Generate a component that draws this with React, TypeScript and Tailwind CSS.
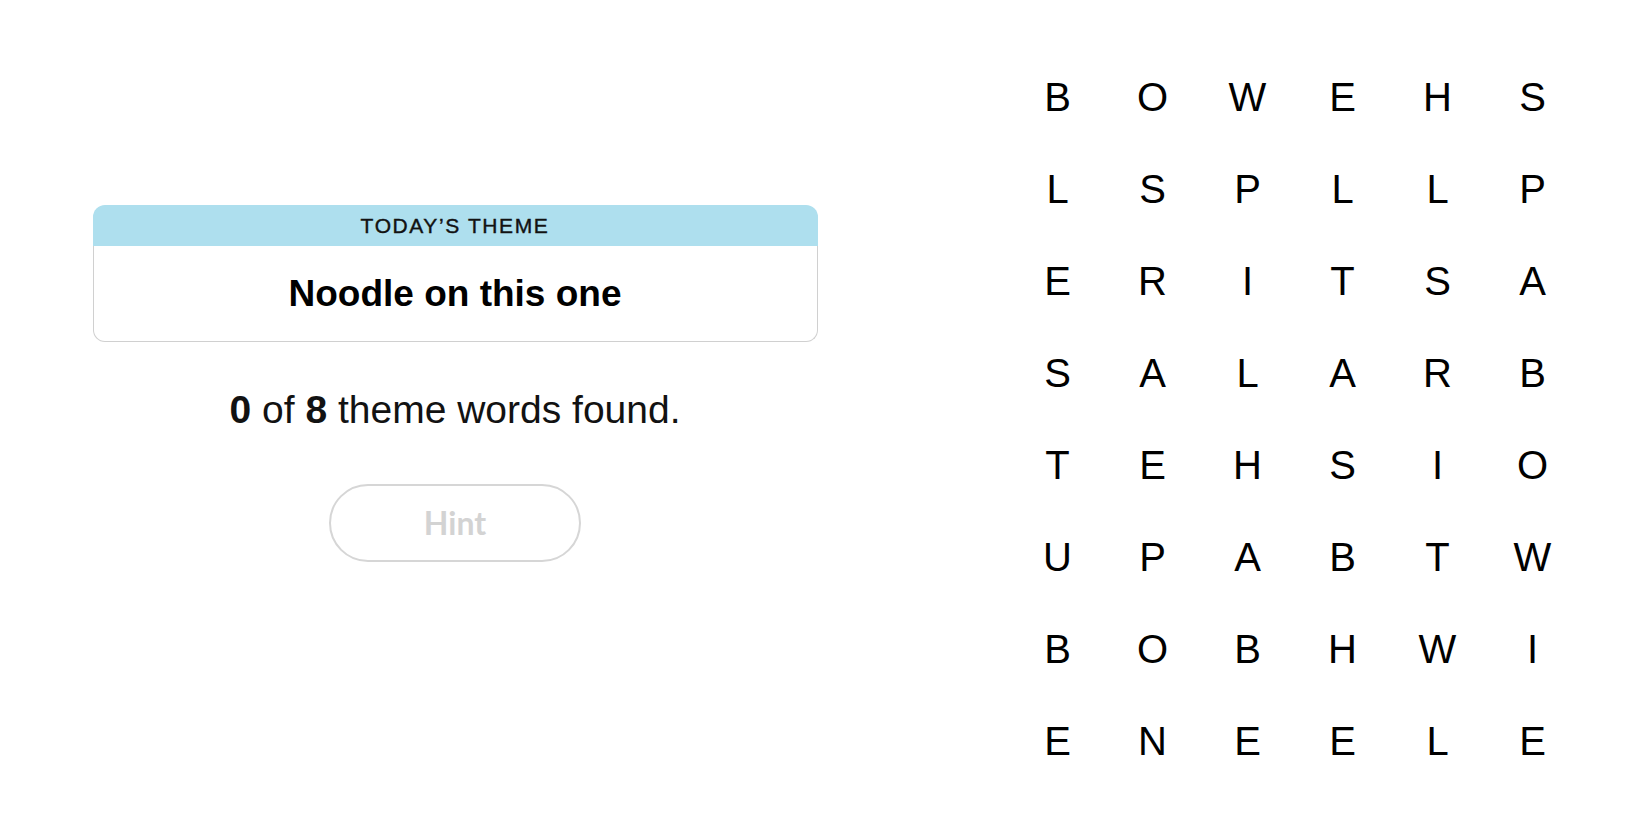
import React from 'react';

const rows = [
  'BOWEHS',
  'LSPLLP',
  'ERITSA',
  'SALARB',
  'TEHSIO',
  'UPABTW',
  'BOBHWI',
  'ENEELE',
];

const ThemeCard: React.FC = () => (
  <div className="w-[725px]">
    <div className="h-[41px] flex items-center justify-center bg-[#aedfee] rounded-t-[12px]">
      <span className="text-[21px] tracking-[1.6px] text-[#121212] [-webkit-text-stroke:0.4px_#121212] font-['Liberation_Sans',sans-serif]">
        TODAY’S THEME
      </span>
    </div>
    <div className="h-[96px] flex items-center justify-center border-x border-b border-[#d0d0d0] rounded-b-[12px] bg-white">
      <span className="text-[37px] font-bold text-black font-['Liberation_Sans',sans-serif]">
        Noodle on this one
      </span>
    </div>
  </div>
);

export default function App() {
  return (
    <div className="w-[1650px] h-[825px] flex bg-white overflow-hidden">
      {/* Left: theme + progress */}
      <div className="w-[910px] flex flex-col items-center pt-[205px]">
        <ThemeCard />
        <p className="mt-[46px] text-[39px] leading-[44px] text-[#121212] font-['Liberation_Sans',sans-serif]">
          <span className="font-bold">0</span> of <span className="font-bold">8</span> theme words found.
        </p>
        <button
          disabled
          className="mt-[52px] w-[252px] h-[78px] rounded-full border-2 border-[#d6d6d6] text-[32px] font-bold text-[#d3d3d3] font-['Lato',sans-serif]"
        >
          Hint
        </button>
      </div>

      {/* Right: letter board */}
      <div className="flex-1 pt-[51px] pl-[100px]">
        <div className="grid grid-cols-[repeat(6,95px)] auto-rows-[92px]">
          {rows.map((row, r) =>
            row.split('').map((ch, c) => (
              <div
                key={`${r}-${c}`}
                className="flex items-center justify-center text-[40px] leading-[92px] text-black font-['Liberation_Sans',sans-serif]"
              >
                {ch}
              </div>
            ))
          )}
        </div>
      </div>
    </div>
  );
}
